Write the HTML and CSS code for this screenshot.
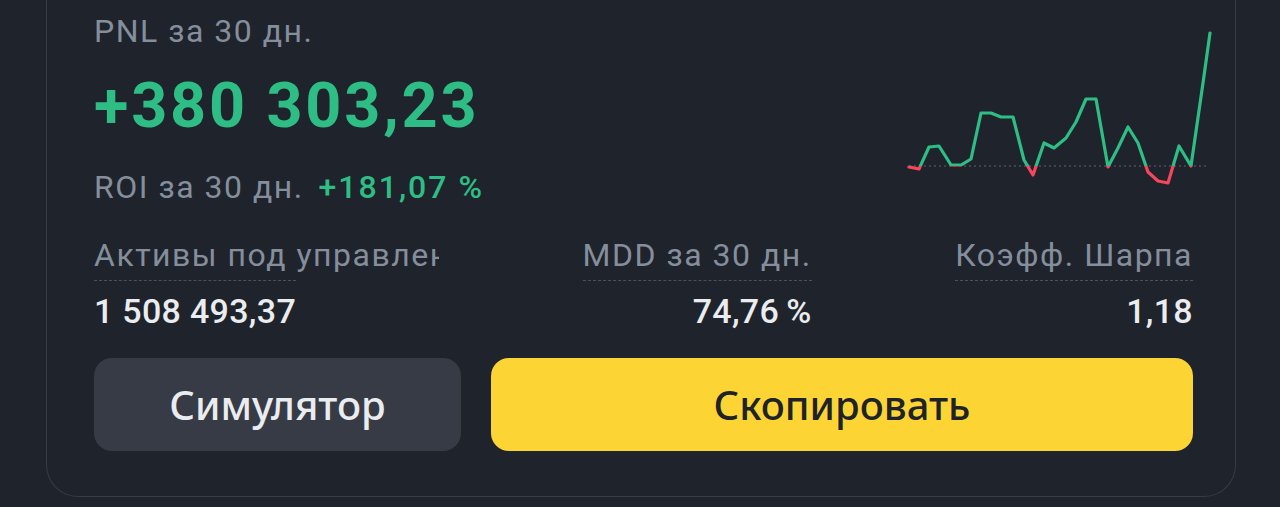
FILE: index.html
```html
<!DOCTYPE html>
<html lang="ru">
<head>
<meta charset="utf-8">
<title>PNL</title>
<link rel="stylesheet" href="styles.css">
</head>
<body>
<div class="card">
  <div class="top">
    <div class="summary">
      <div class="label">PNL за 30 дн.</div>
      <div class="pnl">+380 303,23</div>
      <div class="roi"><span class="label">ROI за 30 дн.</span><span class="roi-val">+181,07 %</span></div>
    </div>
    <svg class="chart" width="315" height="165" viewBox="900 25 315 165" xmlns="http://www.w3.org/2000/svg">
      <defs>
        <clipPath id="above"><rect x="900" y="25" width="315" height="141"/></clipPath>
        <clipPath id="below"><rect x="900" y="166" width="315" height="30"/></clipPath>
      </defs>
      <line x1="908" y1="166" x2="1207" y2="166" stroke="#4a4f59" stroke-width="1.5" stroke-dasharray="2 3"/>
      <g fill="none" stroke-width="3.2" stroke-linejoin="round" stroke-linecap="round">
        <polyline clip-path="url(#above)" stroke="#2ebd85" points="908,167 918,169 928,147 938,146 950,165 960,165 970,159 980,113 990,113 1000,117 1012,117 1023,160 1032,175 1043,143 1053,148 1065,138 1075,122 1085,99 1095,99 1107,167 1117,148 1127,127 1137,143 1147,172 1157,181 1167,183 1178,146 1190,166 1202,83 1209,33"/>
        <polyline clip-path="url(#below)" stroke="#f6465d" points="908,167 918,169 928,147 938,146 950,165 960,165 970,159 980,113 990,113 1000,117 1012,117 1023,160 1032,175 1043,143 1053,148 1065,138 1075,122 1085,99 1095,99 1107,167 1117,148 1127,127 1137,143 1147,172 1157,181 1167,183 1178,146 1190,166 1202,83 1209,33"/>
      </g>
    </svg>
  </div>
  <div class="stats">
    <div class="stat stat-left">
      <div class="stat-label clip">Активы под управлением</div>
      <div class="dash short"></div>
      <div class="stat-value">1 508 493,37</div>
    </div>
    <div class="stat stat-right">
      <div class="stat-label"><span class="ul">MDD за 30 дн.</span></div>
      <div class="stat-value">74,76&#8201;%</div>
    </div>
    <div class="stat stat-right">
      <div class="stat-label"><span class="ul">Коэфф. Шарпа</span></div>
      <div class="stat-value">1,18</div>
    </div>
  </div>
  <div class="actions">
    <button class="btn btn-secondary">Симулятор</button>
    <button class="btn btn-primary">Скопировать</button>
  </div>
</div>
</body>
</html>
```
FILE: styles.css
```css
html, body {
  margin: 0;
  padding: 0;
  background: #1f232b;
  font-family: Roboto, "Noto Sans", sans-serif;
}

.card {
  box-sizing: border-box;
  width: 1190px;
  margin-left: 46px;
  padding: 11px 42px 45px 47px;
  border: 1.5px solid #373c45;
  border-top: none;
  border-radius: 0 0 32px 32px;
}

.top {
  display: flex;
  justify-content: space-between;
  align-items: flex-start;
  height: 197px;
}

.label {
  color: #848e9c;
  font-size: 32px;
  line-height: 40px;
  letter-spacing: 1.5px;
}

.pnl {
  margin-top: 20px;
  color: #2ebd85;
  font-size: 63px;
  font-weight: 700;
  line-height: 70px;
  letter-spacing: 2.8px;
}

.roi {
  margin-top: 26px;
  display: flex;
  align-items: baseline;
  gap: 15px;
  line-height: 40px;
}

.roi-val {
  color: #2ebd85;
  font-size: 32px;
  font-weight: 500;
  letter-spacing: 2px;
}

.chart {
  display: block;
  margin-top: 14px;
  margin-right: -23px;
}

.stats {
  display: flex;
  justify-content: space-between;
  margin-top: 27px;
}

.stat {
  display: flex;
  flex-direction: column;
}

.stat-left {
  width: 345px;
  align-items: flex-start;
}

.stat-right {
  align-items: flex-end;
}

.stat-label {
  color: #848e9c;
  font-size: 32px;
  line-height: 40px;
  letter-spacing: 1.5px;
  white-space: nowrap;
}

.clip {
  width: 345px;
  overflow: hidden;
}

.ul {
  display: inline-block;
  padding-bottom: 5px;
  border-bottom: 1.5px dashed #4b515b;
  line-height: 40px;
}

.dash {
  height: 0;
  margin-top: 5px;
  border-bottom: 1.5px dashed #4b515b;
}

.short {
  width: 202px;
}

.stat-value {
  margin-top: 10px;
  color: #eaecef;
  font-size: 34px;
  font-weight: 500;
  line-height: 40px;
  letter-spacing: 0.3px;
}

.actions {
  display: grid;
  grid-template-columns: 367px 1fr;
  gap: 30px;
  margin-top: 27px;
}

.btn {
  height: 93px;
  border: none;
  border-radius: 18px;
  font-family: "Noto Sans", Roboto, sans-serif;
  font-size: 40px;
  font-weight: 500;
  cursor: pointer;
}

.btn-secondary {
  background: #363b46;
  color: #eaecef;
}

.btn-primary {
  background: #fcd535;
  color: #1e2329;
}
```
